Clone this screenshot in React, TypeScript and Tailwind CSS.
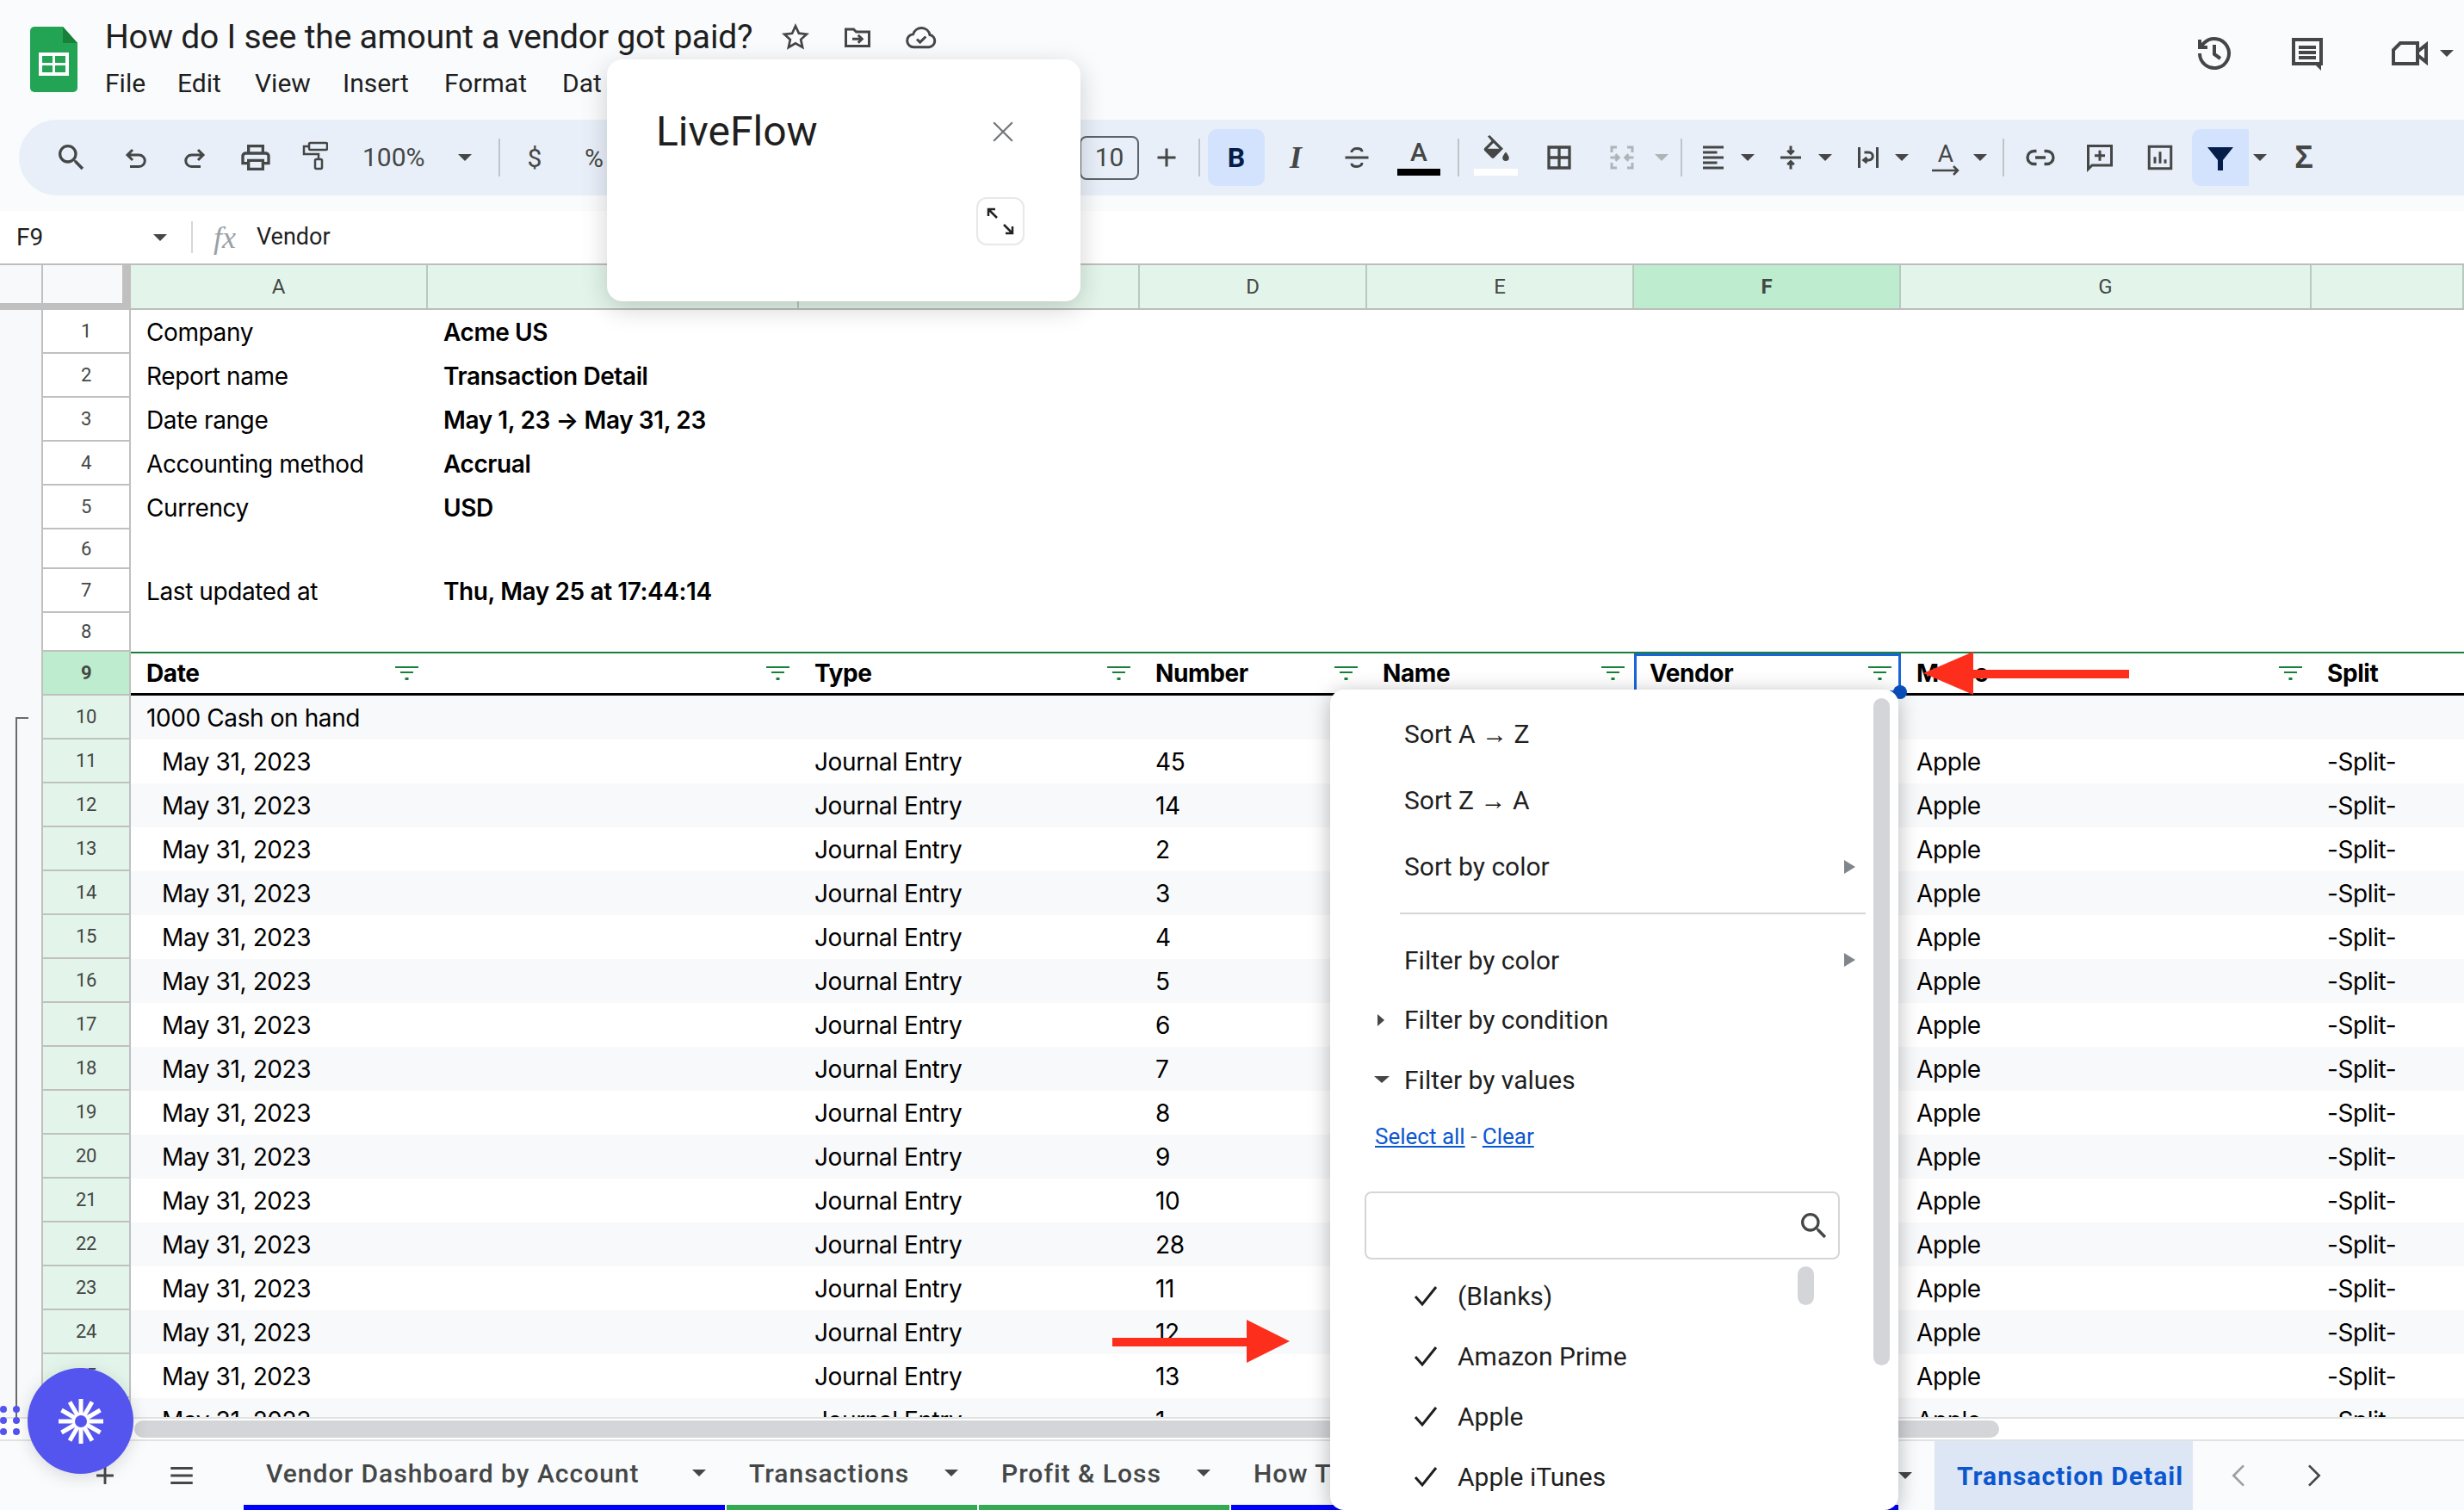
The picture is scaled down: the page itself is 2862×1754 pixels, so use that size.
import { ReactNode } from "react";

const sheetFont = "font-['Inter',sans-serif]";
const uiFont = "font-['Roboto',sans-serif]";

function Caret({ className = "" }: { className?: string }) {
  return <span className={`block h-0 w-0 border-x-[8px] border-t-[8px] border-x-transparent border-t-[#444746] ${className}`} />;
}

function Slot({ className = "", children }: { className?: string; children?: ReactNode }) {
  return <div className={`flex h-full shrink-0 items-center justify-center ${className}`}>{children}</div>;
}

function Sep({ className = "" }: { className?: string }) {
  return <div className={`h-[44px] w-[2px] shrink-0 bg-[#c0c4c9] ${className}`} />;
}

function Icon({ d, className = "h-9 w-9", fill = "currentColor" }: { d: string; className?: string; fill?: string }) {
  return (
    <svg viewBox="0 0 24 24" className={`${className} text-[#444746]`} fill={fill}>
      <path d={d} />
    </svg>
  );
}

function Line({ d, className = "h-9 w-9", sw = 2 }: { d: string; className?: string; sw?: number }) {
  return (
    <svg viewBox="0 0 24 24" className={`${className} text-[#444746]`} fill="none" stroke="currentColor" strokeWidth={sw}>
      <path d={d} />
    </svg>
  );
}

function Logo() {
  return (
    <svg viewBox="0 0 55 76" className="h-[76px] w-[55px] shrink-0">
      <path d="M5 0h33l17 19v52a5 5 0 0 1-5 5H5a5 5 0 0 1-5-5V5a5 5 0 0 1 5-5z" fill="#23a455" />
      <path d="M38 0l17 19-17 0z" fill="#188038" />
      <rect x="10" y="30" width="35" height="27" fill="#fff" />
      <rect x="14" y="34" width="12" height="8" fill="#23a455" />
      <rect x="29" y="34" width="12" height="8" fill="#23a455" />
      <rect x="14" y="45" width="12" height="8" fill="#23a455" />
      <rect x="29" y="45" width="12" height="8" fill="#23a455" />
    </svg>
  );
}

function TitleBar() {
  return (
    <div className="relative flex h-[139px] shrink-0 pl-[35px] pt-[31px]">
      <Logo />
      <div className="ml-[32px] flex flex-col">
        <div className="-mt-[11px] flex h-[46px] items-center">
          <span className={`${uiFont} text-[39px] leading-none tracking-[-0.2px] whitespace-nowrap text-[#1f1f1f]`}>How do I see the amount a vendor got paid?</span>
          <Line className="ml-[32px] h-9 w-9" sw={1.8} d="M12 3.5l2.6 5.6 6 .7-4.5 4.1 1.3 6L12 16.9 6.6 20l1.3-6-4.5-4.1 6-.7z" />
          <Line className="ml-[36px] h-9 w-9" sw={2} d="M3 6h6l2 2h10v11H3zM8 13.5h7M12.5 10.5l3 3-3 3" />
          <Line className="ml-[36px] h-10 w-10" sw={1.8} d="M7 19a4.5 4.5 0 0 1-.6-9A6 6 0 0 1 18 10.500a4.300 4.300 0 0 1-.5 8.500zM9 13.500l2.200 2.200 4-4" />
        </div>
        <div className={`${uiFont} mt-[16px] flex text-[30px] leading-none text-[#1f1f1f]`}>
          <span className="w-[84px]">File</span>
          <span className="w-[90px]">Edit</span>
          <span className="w-[102px]">View</span>
          <span className="w-[118px]">Insert</span>
          <span className="w-[137px]">Format</span>
          <span>Dat</span>
        </div>
      </div>
      <div className="absolute right-0 top-[38px] flex items-center">
        <Line className="h-12 w-12" sw={2} d="M3.500 12a8.500 8.500 0 1 0 2.600-6.100L3.500 8.500M3.500 4v4.500H8M12 7v5.500l3.500 2.500" />
        <svg viewBox="0 0 24 24" className="ml-[60px] h-12 w-12 text-[#444746]" fill="currentColor">
          <path d="M3 3h18v16h-1v3l-3-3H3zM5 5v12h14V5zM7 7.500h10v2H7zM7 10.500h10v2H7zM7 13.500h10v2H7z" fillRule="evenodd" />
        </svg>
        <svg viewBox="0 0 24 24" className="ml-[70px] h-12 w-12 text-[#444746]" fill="none" stroke="currentColor" strokeWidth="2">
          <path d="M7 6h10v12H3v-8zM17 11l5-4v10l-5-4" />
        </svg>
        <Caret className="ml-[12px] mr-[12px]" />
      </div>
    </div>
  );
}

function Toolbar() {
  return (
    <div className={`${uiFont} ml-[22px] flex h-[88px] shrink-0 items-center rounded-l-[44px] bg-[#e9eff9] text-[#444746]`}>
      <Slot className="ml-[26px] w-[70px]"><Icon className="h-10 w-10" d="M15.500 14h-.790l-.280-.270A6.471 6.471 0 0 0 16 9.500 6.500 6.500 0 1 0 9.500 16c1.610 0 3.090-.590 4.230-1.570l.270.280v.790l5 4.990L20.490 19l-4.990-5zm-6 0C7.010 14 5 11.990 5 9.500S7.010 5 9.500 5 14 7.010 14 9.500 11.990 14 9.500 14z" /></Slot>
      <Slot className="ml-[4px] w-[70px]"><Line d="M10 6 6 10l4 4M6 10h9a4.500 4.500 0 0 1 0 9H8" /></Slot>
      <Slot className="w-[70px]"><Line d="M14 6l4 4-4 4M18 10H9a4.500 4.500 0 0 0 0 9h7" /></Slot>
      <Slot className="w-[69px]"><Icon className="h-10 w-10" d="M19 8h-1V3H6v5H5c-1.660 0-3 1.340-3 3v6h4v4h12v-4h4v-6c0-1.660-1.340-3-3-3zM8 5h8v3H8V5zm8 14H8v-4h8v4zm2-4v-2H6v2H4v-4c0-.550.450-1 1-1h14c.550 0 1 .450 1 1v4h-2z" /></Slot>
      <Slot className="w-[70px]">
        <svg viewBox="0 0 30 38" className="h-[38px] w-[30px] text-[#444746]" fill="none" stroke="currentColor" strokeWidth="2.500">
          <rect x="8" y="2" width="21" height="8" rx="1.500" />
          <path d="M8 6H2v9h17v6" />
          <rect x="15" y="21" width="8" height="11" rx="1.500" />
        </svg>
      </Slot>
      <span className="ml-[20px] w-[76px] text-[30px] leading-none">100%</span>
      <Slot className="ml-[23px] w-[40px]"><Caret /></Slot>
      <Sep className="ml-[19px]" />
      <Slot className="ml-[19px] w-[42px] text-[30px]">$</Slot>
      <Slot className="ml-[28px] w-[40px] text-[30px]">%</Slot>
      <div className="ml-[544px] flex h-[51px] w-[69px] shrink-0 items-center justify-center rounded-[8px] border-2 border-[#5f6368] text-[30px] leading-none">10</div>
      <Slot className="ml-[7px] w-[50px]"><Line d="M12 5v14M5 12h14" /></Slot>
      <Sep className="ml-[12px]" />
      <div className="ml-[9px] flex h-[66px] w-[66px] shrink-0 items-center justify-center rounded-[10px] bg-[#d3e3fd] text-[32px] font-bold text-[#041e49]">B</div>
      <Slot className="ml-[1px] w-[70px] font-['Liberation_Serif',serif] text-[36px] font-bold italic">I</Slot>
      <Slot className="ml-[1px] w-[70px]"><Line d="M3 12h18M16 7.500C16 5.500 14 5 12 5S8 6 8 8M8 16.500C8 18.500 10 19 12 19s4-1 4-3" /></Slot>
      <Slot className="relative ml-[2px] w-[70px]">
        <span className="-mt-[12px] text-[30px] font-medium leading-none">A</span>
        <span className="absolute left-[10px] top-[57px] h-[8px] w-[50px] bg-black" />
      </Slot>
      <Sep className="ml-[10px]" />
      <Slot className="relative ml-[7px] w-[70px]">
        <svg viewBox="0 0 24 24" className="-mt-[16px] h-9 w-9 text-[#444746]" fill="currentColor">
          <path d="M6 1l1.500-1L18 10.500 11 17.500a1.500 1.500 0 0 1-2 0L3.500 12a1.500 1.500 0 0 1 0-2L9 4.500zM10.500 6 6 10.500h9zM20 13s2.500 3 2.500 4.500a2.500 2.500 0 0 1-5 0C17.500 16 20 13 20 13z" fillRule="evenodd" />
        </svg>
        <span className="absolute left-[10px] top-[57px] h-[8px] w-[51px] bg-white" />
      </Slot>
      <Slot className="ml-[4px] w-[70px]"><Line sw={2.200} d="M4 4h16v16H4zM12 4v16M4 12h16" /></Slot>
      <Slot className="ml-[3px] w-[70px]">
        <svg viewBox="0 0 24 24" className="h-9 w-9 text-[#b0b3b8]" fill="none" stroke="currentColor" strokeWidth="2">
          <path d="M8 4H4v4M16 4h4v4M8 20H4v-4M16 20h4v-4M3 12h6M7 9.500 9.500 12 7 14.500M21 12h-6M17 9.500 14.500 12l2.500 2.500" />
        </svg>
      </Slot>
      <Slot className="ml-[1px] w-[20px]"><Caret className="border-t-[#b0b3b8]" /></Slot>
      <Sep className="ml-[12px]" />
      <Slot className="ml-[6px] w-[60px]"><Line sw={2} d="M4 4h16M4 8h11M4 12h16M4 16h11M4 20h16" /></Slot>
      <Slot className="w-[20px]"><Caret /></Slot>
      <Slot className="ml-[10px] w-[60px]"><Line sw={2} d="M4 12h16M12 3v6M9.500 6.500 12 9l2.500-2.500M12 21v-6M9.500 17.500 12 15l2.500 2.500" /></Slot>
      <Slot className="w-[20px]"><Caret /></Slot>
      <Slot className="ml-[10px] w-[59px]"><Line sw={2} d="M5 4v16M19 4v16M9 8h3.500a2.500 2.500 0 0 1 0 6H9M11 12l-2.500 2 2.500 2" /></Slot>
      <Slot className="w-[20px]"><Caret /></Slot>
      <Slot className="relative ml-[11px] w-[60px]">
        <span className="-mt-[8px] text-[28px] leading-none">A</span>
        <svg viewBox="0 0 32 12" className="absolute left-[14px] top-[53px] h-[12px] w-[32px] text-[#444746]" fill="none" stroke="currentColor" strokeWidth="2.500"><path d="M0 6h30M25 1l5 5-5 5" /></svg>
      </Slot>
      <Slot className="w-[20px]"><Caret /></Slot>
      <Sep className="ml-[16px]" />
      <Slot className="ml-[7px] w-[70px]"><Line sw={2.200} d="M9 7H7a5 5 0 0 0 0 10h2M15 7h2a5 5 0 0 1 0 10h-2M8 12h8" /></Slot>
      <Slot className="w-[68px]"><Line sw={2} d="M3 3h18v15H6l-3 3zM12 6.500v8M8 10.500h8" /></Slot>
      <Slot className="ml-[1px] w-[70px]"><Line sw={2} d="M3.500 3.500h17v17h-17zM8 16.500v-5M12 16.500v-9M16 16.500v-3" /></Slot>
      <Slot className="ml-[2px] !h-[66px] w-[66px] rounded-l-[10px] bg-[#d3e3fd]">
        <svg viewBox="0 0 24 24" className="h-9 w-9" fill="#041e49"><path d="M2 4h20l-8 10v8h-4v-8z" /></svg>
      </Slot>
      <Slot className="ml-[3px] w-[20px]"><Caret /></Slot>
      <Slot className={`ml-[15px] w-[52px] font-['Liberation_Sans',sans-serif] text-[36px] font-bold leading-none`}>Σ</Slot>
    </div>
  );
}

function FormulaBar() {
  return (
    <div className="flex h-[61px] shrink-0 items-center bg-white">
      <span className={`${uiFont} ml-[19px] w-[150px] text-[28px] text-[#1f1f1f]`}>F9</span>
      <Caret className="ml-[9px]" />
      <div className="ml-[28px] h-[37px] w-[2px] bg-[#d5d7da]" />
      <span className="ml-[24px] w-[50px] font-['Liberation_Serif',serif] text-[36px] italic leading-none text-[#9aa0a6]">fx</span>
      <span className={`${uiFont} text-[27px] text-[#1f1f1f]`}>Vendor</span>
    </div>
  );
}

function ColHeaders() {
  const heads = [
    { label: "A", w: "w-[345px]" },
    { label: "", w: "w-[431px]" },
    { label: "", w: "w-[396px]" },
    { label: "D", w: "w-[264px]" },
    { label: "E", w: "w-[310px]" },
    { label: "F", w: "w-[310px]", on: true },
    { label: "G", w: "w-[477px]" },
    { label: "", w: "flex-1" },
  ];
  return (
    <div className={`${uiFont} flex h-[54px] shrink-0 border-t-[2px] border-[#bdbdbd] text-[24px] text-[#444746]`}>
      <div className="h-full w-[50px] border-b-[8px] border-r-2 border-[#c0c0c0] bg-[#f8f9fa]" />
      <div className="h-full w-[102px] border-b-[8px] border-r-[10px] border-[#c0c0c0] bg-[#f8f9fa]" />
      <div className="flex flex-1 border-b-2 border-[#bdbdbd]">
        {heads.map((h, i) => (
          <div key={i} className={`flex h-full items-center justify-center border-r-2 border-[#b9c9bf] ${h.w} ${h.on ? "bg-[#bdecce] font-bold" : "bg-[#e3f5ea]"}`}>
            {h.label}
          </div>
        ))}
      </div>
    </div>
  );
}

function RowHead({ n, tint = "" }: { n: number; tint?: string }) {
  return (
    <>
      <div className="h-full w-[50px] shrink-0 border-r-2 border-[#c0c0c0] bg-[#f8f9fa]" />
      <div className={`${uiFont} flex h-full w-[102px] shrink-0 items-center justify-center border-b-2 border-r-2 border-[#c0c0c0] text-[22px] text-[#444746] ${tint}`}>{n}</div>
    </>
  );
}

function FilterIcon() {
  return (
    <svg viewBox="0 0 27 16" className="h-[16px] w-[27px] shrink-0" fill="#188038">
      <rect x="0" y="0" width="27" height="2" />
      <rect x="6" y="6" width="15" height="2" />
      <rect x="11.500" y="13" width="4" height="3" />
    </svg>
  );
}

function HeadCell({ w, label, filter = true }: { w: string; label?: string; filter?: boolean }) {
  return (
    <div className={`flex h-full shrink-0 items-center justify-between pl-[18px] pr-[11px] ${w}`}>
      <span>{label}</span>
      {filter && <FilterIcon />}
    </div>
  );
}

const meta = [
  { n: 1, h: "h-[51px]", a: "Company", b: "Acme US" },
  { n: 2, h: "h-[51px]", a: "Report name", b: "Transaction Detail" },
  { n: 3, h: "h-[51px]", a: "Date range", b: "May 1, 23 → May 31, 23" },
  { n: 4, h: "h-[51px]", a: "Accounting method", b: "Accrual" },
  { n: 5, h: "h-[51px]", a: "Currency", b: "USD" },
  { n: 6, h: "h-[46px]", a: "", b: "" },
  { n: 7, h: "h-[51px]", a: "Last updated at", b: "Thu, May 25 at 17:44:14" },
  { n: 8, h: "h-[45px]", a: "", b: "" },
];

const numbers = [45, 14, 2, 3, 4, 5, 6, 7, 8, 9, 10, 28, 11, 12, 13, 1];

function Grid() {
  return (
    <div className={`${sheetFont} relative h-[1286px] shrink-0 overflow-hidden bg-white text-[28px] tracking-[-0.4px] text-black`}>
      {meta.map((r) => (
        <div key={r.n} className={`flex items-center ${r.h}`}>
          <RowHead n={r.n} />
          <div className="w-[345px] shrink-0 pl-[18px] whitespace-nowrap">{r.a}</div>
          <div className="pl-[18px] font-semibold whitespace-nowrap">{r.b}</div>
        </div>
      ))}

      <div className="flex h-[51px]">
        <RowHead n={9} tint="bg-[#bdecce] font-bold" />
        <div className="flex flex-1 border-b-[3px] border-t-2 border-b-black border-t-[#188038] font-bold">
          <HeadCell w="w-[345px]" label="Date" />
          <HeadCell w="w-[431px]" />
          <HeadCell w="w-[396px]" label="Type" />
          <HeadCell w="w-[264px]" label="Number" />
          <HeadCell w="w-[310px]" label="Name" />
          <div className="relative -mt-[0px] flex h-full w-[310px] shrink-0 items-center justify-between border-[3px] border-[#1a66d9] pl-[15px] pr-[8px]">
            <span>Vendor</span>
            <FilterIcon />
            <span className="absolute -bottom-[10px] -right-[10px] h-4 w-4 rounded-full bg-[#0b50c0]" />
          </div>
          <HeadCell w="w-[477px]" label="Memo" />
          <div className="flex-1 pl-[18px] leading-[46px]">Split</div>
        </div>
      </div>

      <div className="flex h-[51px] items-center bg-[#f8f9fb]">
        <RowHead n={10} tint="bg-[#e3f5ea]" />
        <div className="pl-[18px] whitespace-nowrap">1000 Cash on hand</div>
      </div>

      {numbers.map((num, i) => (
        <div key={i} className={`flex h-[51px] items-center whitespace-nowrap ${i % 2 === 0 ? "bg-white" : "bg-[#f8f9fb]"}`}>
          <RowHead n={i + 11} tint="bg-[#e3f5ea]" />
          <div className="w-[776px] shrink-0 pl-[36px]">May 31, 2023</div>
          <div className="w-[396px] shrink-0 pl-[18px]">Journal Entry</div>
          <div className="w-[884px] shrink-0 pl-[18px]">{num}</div>
          <div className="w-[477px] shrink-0 pl-[18px]">Apple</div>
          <div className="pl-[18px]">-Split-</div>
        </div>
      ))}

      <div className="absolute left-[18px] top-[473px] h-[900px] w-[15px] border-l-2 border-t-2 border-[#6b6b6b]" />
    </div>
  );
}

function ScrollBar() {
  return (
    <div className="flex h-[28px] shrink-0 items-center border-y-2 border-[#e1e3e1] bg-white pl-[156px]">
      <div className="h-[20px] w-[2166px] rounded-[10px] bg-[#d3d5d8]" />
    </div>
  );
}

function Tab({ w, color, label }: { w: string; color: string; label: string }) {
  return (
    <div className={`flex h-full shrink-0 flex-col ${w}`}>
      <div className="flex flex-1 items-center justify-between pl-[26px] pr-[22px]">
        <span className="whitespace-nowrap">{label}</span>
        <Caret />
      </div>
      <div className={`h-[6px] ${color}`} />
    </div>
  );
}

function Tabs() {
  return (
    <div className={`${uiFont} flex h-[80px] shrink-0 bg-[#f9fbfd] pl-[105px] text-[30px] font-medium tracking-[1px] text-[#444746]`}>
      <Slot className="w-[34px]"><Line className="h-10 w-10" d="M12 5v14M5 12h14" /></Slot>
      <Slot className="ml-[55px] w-[34px]"><Line className="h-10 w-10" sw={2.200} d="M3 6h18M3 12h18M3 18h18" /></Slot>
      <div className="ml-[55px] flex gap-[2px]">
        <Tab w="w-[559px]" color="bg-[#0000ff]" label="Vendor Dashboard by Account" />
        <Tab w="w-[291px]" color="bg-[#34a853]" label="Transactions" />
        <Tab w="w-[291px]" color="bg-[#34a853]" label="Profit & Loss" />
        <Tab w="w-[775px]" color="bg-[#0000ff]" label="How To" />
      </div>
      <Slot className="w-[42px] justify-start"><Caret /></Slot>
      <div className="flex h-full w-[300px] items-center overflow-hidden bg-[#dde6f5] pl-[26px] font-bold text-[#0b57d0]">
        <span className="whitespace-nowrap">Transaction Detail</span>
      </div>
      <Slot className="ml-[34px] w-[40px]"><Line className="h-10 w-10 opacity-50" sw={1.600} d="M15 5l-7 7 7 7" /></Slot>
      <Slot className="ml-[46px] w-[40px]"><Line className="h-10 w-10" sw={1.600} d="M9 5l7 7-7 7" /></Slot>
    </div>
  );
}

function MenuItem({ y, children }: { y: string; children: ReactNode }) {
  return <div className={`flex items-center pl-[86px] pr-[50px] ${y}`}>{children}</div>;
}

function SubArrow() {
  return <span className="ml-auto block h-0 w-0 border-y-[8px] border-l-[13px] border-y-transparent border-l-[#80868b]" />;
}

function CheckRow({ label, h = "h-[70px]" }: { label: string; h?: string }) {
  return (
    <div className={`flex items-center pl-[96px] ${h}`}>
      <svg viewBox="0 0 30 30" className="h-[30px] w-[30px]" fill="none" stroke="#1f1f1f" strokeWidth="3"><path d="M3 16l8 9L27 5" /></svg>
      <span className="ml-[22px]">{label}</span>
    </div>
  );
}

function FilterMenu() {
  return (
    <div className={`${uiFont} absolute left-[1545px] top-[801px] h-[953px] w-[660px] overflow-hidden rounded-[16px] bg-white text-[30px] text-[#1f1f1f] shadow-[0_4px_24px_rgba(0,0,0,0.28)]`}>
      <div className="absolute left-[631px] top-[10px] h-[775px] w-[19px] rounded-[10px] bg-[#d3d5d8]" />
      <div className="pt-[12px]">
        <MenuItem y="h-[78px]">Sort A → Z</MenuItem>
        <MenuItem y="h-[77px]">Sort Z → A</MenuItem>
        <MenuItem y="h-[77px]">Sort by color<SubArrow /></MenuItem>
      </div>
      <div className="ml-[81px] mt-[15px] h-[2px] w-[541px] bg-[#d5d5da]" />
      <div className="pt-[15px]">
        <MenuItem y="h-[76px]">Filter by color<SubArrow /></MenuItem>
        <MenuItem y="relative h-[63px]">
          <span className="absolute left-[55px] h-0 w-0 border-y-[7px] border-l-[8px] border-y-transparent border-l-[#444746]" />
          Filter by condition
        </MenuItem>
        <MenuItem y="relative h-[76px]">
          <span className="absolute left-[51px] h-0 w-0 border-x-[9px] border-t-[8px] border-x-transparent border-t-[#444746]" />
          Filter by values
        </MenuItem>
      </div>
      <div className="ml-[52px] mt-[8px] text-[26px] leading-[40px] text-[#5f6368]">
        <span className="text-[#0b57d0] underline">Select all</span> - <span className="text-[#0b57d0] underline">Clear</span>
      </div>
      <div className="relative ml-[40px] mt-[44px] flex h-[79px] w-[552px] items-center justify-end rounded-[8px] border-2 border-[#d5d5da] pr-[8px]">
        <Icon className="h-10 w-10" d="M15.500 14h-.790l-.280-.270A6.471 6.471 0 0 0 16 9.500 6.500 6.500 0 1 0 9.500 16c1.610 0 3.090-.590 4.230-1.570l.270.280v.790l5 4.990L20.490 19l-4.990-5zm-6 0C7.010 14 5 11.990 5 9.500S7.010 5 9.500 5 14 7.010 14 9.500 11.990 14 9.500 14z" />
      </div>
      <div className="relative pt-[7px]">
        <div className="absolute left-[543px] top-[8px] h-[45px] w-[19px] rounded-[10px] bg-[#d3d5d8]" />
        <CheckRow label="(Blanks)" />
        <CheckRow label="Amazon Prime" />
        <CheckRow label="Apple" />
        <CheckRow label="Apple iTunes" />
      </div>
    </div>
  );
}

function LiveFlowModal() {
  return (
    <div className={`${uiFont} absolute left-[705px] top-[69px] h-[281px] w-[550px] rounded-[18px] bg-white shadow-[0_8px_30px_rgba(0,0,0,0.18)]`}>
      <span className="absolute left-[57px] top-[54px] text-[48px] leading-[60px] text-[#1f1f1f]">LiveFlow</span>
      <svg viewBox="0 0 24 24" className="absolute left-[447px] top-[71px] h-[26px] w-[26px]" fill="none" stroke="#70757a" strokeWidth="2"><path d="M2 2l20 20M22 2L2 22" /></svg>
      <div className="absolute left-[429px] top-[160px] flex h-[56px] w-[56px] items-center justify-center rounded-[12px] border-2 border-[#e8e8ec] bg-white">
        <svg viewBox="0 0 32 32" className="h-[32px] w-[32px]" fill="none" stroke="#222" strokeWidth="2.500"><path d="M2 10V2h8M2 2l10 10M30 22v8h-8M30 30 20 20" /></svg>
      </div>
    </div>
  );
}

function Arrow({ className, flip = false }: { className: string; flip?: boolean }) {
  return (
    <svg viewBox="0 0 206 50" className={`absolute ${className} ${flip ? "-scale-x-100" : ""}`} fill="#fd2f1c" preserveAspectRatio="none">
      <path d="M0 21h156V0l50 25-50 25V31H0z" />
    </svg>
  );
}

function Fab() {
  const spokes = [0, 30, 60, 90, 120, 150, 180, 210, 240, 270, 300, 330];
  return (
    <>
      <div className="absolute left-0 top-[1633px] grid grid-cols-2 gap-x-[7px] gap-y-[5px]">
        {Array.from({ length: 6 }).map((_, i) => (
          <span key={i} className="h-[8px] w-[8px] rounded-full bg-[#5454ee]" />
        ))}
      </div>
      <div className="absolute left-[32px] top-[1589px] flex h-[123px] w-[123px] items-center justify-center rounded-full bg-[#5454ee] shadow-[0_4px_20px_rgba(0,0,0,0.14)]">
        <svg viewBox="-30 -30 60 60" className="h-[60px] w-[60px]" stroke="#fff" strokeWidth="5" fill="none">
          {spokes.map((a) => (
            <line key={a} x1="0" y1="-26" x2="0" y2="-8" transform={`rotate(${a})`} />
          ))}
          <circle r="8.500" strokeWidth="3" />
        </svg>
      </div>
    </>
  );
}

export default function App() {
  return (
    <div className="relative flex h-[1754px] w-[2862px] flex-col overflow-hidden bg-[#f9fbfd]">
      <TitleBar />
      <Toolbar />
      <div className="h-[18px] shrink-0" />
      <FormulaBar />
      <ColHeaders />
      <Grid />
      <ScrollBar />
      <Tabs />
      <LiveFlowModal />
      <FilterMenu />
      <Arrow className="left-[2234px] top-[757px] h-[50px] w-[239px]" flip />
      <Arrow className="left-[1292px] top-[1533px] h-[50px] w-[206px]" />
      <Fab />
    </div>
  );
}
